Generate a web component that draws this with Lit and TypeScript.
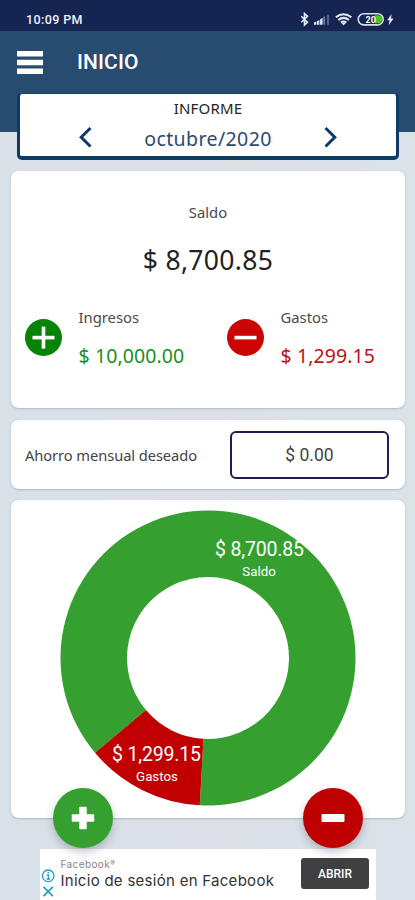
import { LitElement, html, css, svg } from "lit";
import { customElement } from "lit/decorators.js";

const CX = 148;
const INNER = 81;
const OUTER = 147.5;

function ringSlice(from: number, to: number): string {
  const point = (r: number, deg: number) => {
    const a = (deg * Math.PI) / 180;
    return `${(CX + r * Math.cos(a)).toFixed(2)} ${(CX + r * Math.sin(a)).toFixed(2)}`;
  };
  const large = to - from > 180 ? 1 : 0;
  return `M${point(OUTER, from)}A${OUTER} ${OUTER} 0 ${large} 1 ${point(OUTER, to)}L${point(INNER, to)}A${INNER} ${INNER} 0 ${large} 0 ${point(INNER, from)}Z`;
}

@customElement("status-bar")
class StatusBar extends LitElement {
  static styles = css`
    :host { display: flex; justify-content: space-between; height: 31px; padding: 0 19px 0 26px; box-sizing: border-box; background: #152450; color: #eef1f8; }
    .time { font: 500 12.5px/40px Roboto, sans-serif; letter-spacing: 0.4px; }
    .icons { display: block; margin-top: 10px; }
    .charge { font: 700 9px Roboto, sans-serif; }
  `;
  render() {
    return html`
      <span class="time">10:09 PM</span>
      <svg class="icons" width="96" height="18" viewBox="300 10 96 18">
        <path d="M301.3 16.2l6.2 6-3 2.7V13.6l3 2.7-6.2 6" fill="none" stroke="#e6eaf4" stroke-width="1.6"/>
        <path d="M314 24.8v-2.2l2.4-1v3.2zM317 24.8v-3.6l2.4-1.2v4.8zM320 24.8v-5.4l2.6-1.6v7z" fill="#d9dfec"/>
        <path d="M323.200 24.800v-7.600l2-1.200v8.800zM327.200 24.800v-10h1.600v10z" fill="#66739a"/>
        <g fill="none" stroke="#e6eaf4" stroke-width="2">
          <path d="M335.800 17.200q7.800-6 15.600 0"/>
          <path d="M338.300 20q5.300-4.200 10.600 0"/>
          <path d="M340.900 22.600q2.700-2 5.400 0"/>
        </g>
        <path d="M341.500 22.800h4.200l-2.100 2.600z" fill="#e6eaf4"/>
        <rect x="358.200" y="13.700" width="25" height="11.200" rx="5.600" fill="#152450" stroke="#d9dfec" stroke-width="1.600"/>
        <path d="M375 15.300h3.200a4 4 0 0 1 0 8H375z" fill="#4cc51c"/>
        <text class="charge" x="365.500" y="22.500" fill="#fff">20</text>
        <path d="M391.600 14l-4.400 6.200h2.400l-1 5 5-6.700h-2.600z" fill="#e6eaf4"/>
      </svg>
    `;
  }
}

@customElement("month-picker")
class MonthPicker extends LitElement {
  static styles = css`
    :host { display: block; box-sizing: border-box; height: 67px; margin: 0 16px 0 17px; background: #fff; border: solid #0d3b67; border-width: 1.5px 3px 4px; border-top-color: #1c426a; border-radius: 5px; text-align: center; font-family: "Noto Sans", sans-serif; }
    .title { font-size: 15px; line-height: 20px; padding-top: 4px; letter-spacing: 0.2px; color: #252525; }
    .row { display: flex; align-items: center; justify-content: center; gap: 46px; height: 34px; margin-top: 3px; }
    .month { width: 138px; white-space: nowrap; font-size: 19.5px; letter-spacing: 0.4px; color: #2c4a6d; }
    .arrow { width: 16px; height: 22px; fill: none; stroke: #0d3b67; stroke-width: 3; flex: none; margin-top: -2px; }
  `;
  render() {
    return html`
      <div class="title">INFORME</div>
      <div class="row">
        <svg class="arrow" viewBox="0 0 16 22"><path d="M13.500 2L4.200 11.300l9.300 9.200"/></svg>
        <span class="month">octubre/2020</span>
        <svg class="arrow" viewBox="0 0 16 22"><path d="M2.500 2l9.300 9.300-9.300 9.200"/></svg>
      </div>
    `;
  }
}

@customElement("ad-banner")
class AdBanner extends LitElement {
  static styles = css`
    :host { display: flex; box-sizing: border-box; width: 336px; height: 51px; background: #fff; margin: 31px 0 0 40px; padding: 0 7px 0 1px; }
    .marks { width: 15px; height: 30px; margin: 20px 4.5px 0 0; fill: none; stroke: #1ba0bd; stroke-width: 1.3; }
    .copy { flex: 1; white-space: nowrap; font-family: Inter, sans-serif; }
    .brand { font-size: 10px; line-height: 14px; margin-top: 8px; color: #858585; letter-spacing: 0.4px; }
    .brand sup { font-size: 7px; line-height: 0; vertical-align: 2px; }
    .line { font-size: 15px; line-height: 20px; letter-spacing: 0.28px; color: #333; }
    .open { width: 68px; height: 31px; margin-top: 9.5px; border: 0; padding: 0; border-radius: 3px; background: #404040; color: #fff; font: 500 12px Roboto, sans-serif; }
  `;
  render() {
    return html`
      <svg class="marks" viewBox="0 0 15 30">
        <circle cx="7.200" cy="6.800" r="5.800"/>
        <path d="M5.800 6h1.600v4M5.600 10h3.600M6.600 3.600h1.600"/>
        <path d="M2.500 17.800l9.400 9.400m0-9.400l-9.400 9.400" stroke-width="1.700"/>
      </svg>
      <div class="copy">
        <div class="brand">Facebook<sup>®</sup></div>
        <div class="line">Inicio de sesión en Facebook</div>
      </div>
      <button class="open">ABRIR</button>
    `;
  }
}

@customElement("app-root")
class AppRoot extends LitElement {
  static styles = css`
    :host { display: block; width: 415px; height: 900px; overflow: hidden; background: linear-gradient(90deg, #d9e0e8, #dce0e6 50%, #d9e3e8); font-family: "Noto Sans", sans-serif; color: #444; }
    .header { height: 101px; background: #284b70; }
    .bar { display: flex; align-items: center; height: 62px; padding-left: 17px; gap: 34px; }
    .menu { width: 26px; height: 23px; fill: #fff; }
    .heading { margin: 0; font: 500 21px/24px Roboto, sans-serif; letter-spacing: 0.1px; color: #fff; }
    .body { padding: 10.5px 10px 0 11px; margin-top: 28px; }
    .card { box-sizing: border-box; background: #fff; border-radius: 8px; box-shadow: 0 1px 2px #8d98a988; }
    .summary { height: 237.5px; padding: 31px 0 0 14px; }
    .caption { font-size: 14.8px; line-height: 20px; color: #4b4b4b; letter-spacing: 0; }
    .balance { text-align: center; margin-left: -14px; }
    .total { font-size: 26.5px; line-height: 36px; letter-spacing: 0.35px; color: #222; margin: 20px 0 29px; }
    .flows { display: grid; grid-template-columns: 202px 1fr; }
    .flow { display: flex; gap: 16.5px; }
    .disc { width: 37px; height: 37px; margin-top: 12px; flex: none; }
    .amount { font-size: 19.5px; line-height: 26px; margin-top: 16px; white-space: nowrap; letter-spacing: 0.1px; }
    .in { color: #17901b; }
    .out { color: #bd1111; }
    .saving { display: flex; align-items: center; justify-content: space-between; height: 69px; margin-top: 12px; padding: 0 16px 0 14px; }
    .goal { font-size: 14.7px; letter-spacing: -0.08px; color: #444; }
    .field { box-sizing: border-box; width: 159px; height: 48px; border: 2px solid #201d50; border-radius: 6px; text-align: center; font: 400 17.5px/45px Roboto, sans-serif; color: #444; }
    .chart { position: relative; height: 317.5px; margin-top: 11px; padding: 10px 0 0 49px; }
    .ring { display: block; width: 296px; height: 296px; }
    .figure { font: 400 19.5px Roboto, sans-serif; fill: #fff; text-anchor: middle; }
    .name { font: 400 13.3px Roboto, sans-serif; fill: #fff; text-anchor: middle; }
    .fab { position: absolute; bottom: -30px; width: 60px; height: 60px; border: 0; padding: 0; border-radius: 50%; box-shadow: 0 4px 8px #4a556555; }
    .fab svg { display: block; fill: #fff; }
    .add { left: 42px; background: #35a02f; }
    .sub { right: 42px; background: #bf0000; }
  `;

  private disc(plus: boolean) {
    return html`<svg class="disc" viewBox="0 0 37 37">
      <circle cx="18.500" cy="18.500" r="18.500" fill=${plus ? "#078307" : "#cb0404"}/>
      <path d="M7.500 16.800h22v3.600h-22z" fill="#fff"/>
      ${plus ? svg`<path d="M16.700 7.600h3.600v22h-3.600z" fill="#fff"/>` : ""}
    </svg>`;
  }

  render() {
    return html`
      <status-bar></status-bar>
      <header class="header">
        <div class="bar">
          <svg class="menu" viewBox="0 0 26 23"><path d="M0 0h26v5.500H0zM0 8.700h26v5.600H0zM0 17.500h26V23H0z"/></svg>
          <h1 class="heading">INICIO</h1>
        </div>
        <month-picker></month-picker>
      </header>
      <main class="body">
        <section class="card summary">
          <div class="balance">
            <div class="caption">Saldo</div>
            <div class="total">$ 8,700.85</div>
          </div>
          <div class="flows">
            <div class="flow">${this.disc(true)}<div><div class="caption">Ingresos</div><div class="amount in">$ 10,000.00</div></div></div>
            <div class="flow">${this.disc(false)}<div><div class="caption">Gastos</div><div class="amount out">$ 1,299.15</div></div></div>
          </div>
        </section>
        <section class="card saving">
          <span class="goal">Ahorro mensual deseado</span>
          <div class="field">$ 0.00</div>
        </section>
        <section class="card chart">
          <svg class="ring" viewBox="0 0 296 296">
            <path d=${ringSlice(-220, 93.2)} fill="#35a02f"/>
            <path d=${ringSlice(93.2, 140)} fill="#c00000"/>
            <text class="figure" x="199.500" y="46" textLength="89">$ 8,700.85</text>
            <text class="name" x="199" y="66">Saldo</text>
            <text class="figure" x="96.500" y="251" textLength="89">$ 1,299.15</text>
            <text class="name" x="97" y="271">Gastos</text>
          </svg>
          <button class="fab add"><svg viewBox="0 0 60 60"><path d="M27 19.500h6v7.500h7.500v6H33v7.500h-6V33h-7.500v-6H27z" stroke="#fff" stroke-width="1.500" stroke-linejoin="round"/></svg></button>
          <button class="fab sub"><svg viewBox="0 0 60 60"><rect x="18.500" y="26" width="23" height="8" rx="1"/></svg></button>
        </section>
      </main>
      <ad-banner></ad-banner>
    `;
  }
}
